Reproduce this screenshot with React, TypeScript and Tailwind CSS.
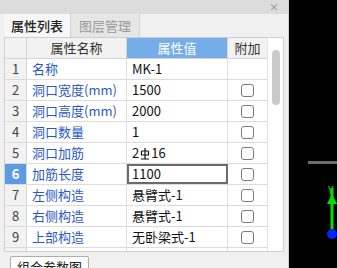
import React from 'react';

type Row = { name: string; value: React.ReactNode; check: boolean };

const RebarIcon = () => (
  <svg width="10" height="13" viewBox="0 0 10 13" className="inline-block mx-[1px] -mt-[2px]">
    <path d="M5 1 V12 M1.5 4 H8.5 M1.5 4 V8 H8.5 V4 M1 12 H9" stroke="#111" strokeWidth="1.2" fill="none" />
  </svg>
);

const rows: Row[] = [
  { name: '名称', value: 'MK-1', check: false },
  { name: '洞口宽度(mm)', value: '1500', check: true },
  { name: '洞口高度(mm)', value: '2000', check: true },
  { name: '洞口数量', value: '1', check: true },
  { name: '洞口加筋', value: <span>2<RebarIcon />16</span>, check: true },
  { name: '加筋长度', value: '1100', check: true },
  { name: '左侧构造', value: '悬臂式-1', check: true },
  { name: '右侧构造', value: '悬臂式-1', check: true },
  { name: '上部构造', value: '无卧梁式-1', check: true },
  { name: '', value: '', check: true },
];

const Checkbox = () => (
  <div className="w-[13px] h-[13px] rounded-[3px] border border-[#7a7a7a] bg-white" />
);

const App = () => {
  return (
    <div
      className="w-[337px] h-[268px] flex overflow-hidden bg-black text-[13px] text-[#111]"
      style={{ fontFamily: '"Noto Sans CJK SC", "Noto Sans", sans-serif' }}
    >
      <div className="w-[288px] h-full bg-[#f0f0f0] flex flex-col overflow-hidden">
        {/* title bar */}
        <div className="h-[14px] shrink-0 bg-[#dcdcdc] flex items-center justify-end pr-[9px] text-[10px] leading-none text-[#8a8a8a]">
          ×
        </div>
        {/* tabs */}
        <div className="h-[23px] shrink-0 flex items-end pl-[4px] bg-[#f0f0f0]">
          <div className="h-[23px] px-[7px] flex items-center bg-[#f7f7f7] border-r border-[#d0d0d0] font-medium text-[#222]">
            属性列表
          </div>
          <div className="h-[23px] px-[8px] flex items-center bg-[#e6e6e6] border-r border-[#d4d4d4] text-[#9a9a9a]">
            图层管理
          </div>
        </div>
        {/* table */}
        <div className="mx-[4px] h-[215px] shrink-0 flex border border-[#cfcfcf] bg-white overflow-hidden">
          <div className="w-[262px] flex flex-col">
            <div className="grid grid-cols-[22px_100px_101px_39px] h-[21px] shrink-0 border-b border-[#d6d6d6] leading-[20px]">
              <div className="bg-[#f2f2f2] border-r border-[#d6d6d6]" />
              <div className="bg-[#f2f2f2] border-r border-[#d6d6d6] text-center text-[#333]">属性名称</div>
              <div className="bg-[#75acea] border-r border-[#d6d6d6] text-center text-white">属性值</div>
              <div className="bg-[#f2f2f2] text-center text-[#333]">附加</div>
            </div>
            {rows.map((row, i) => {
              const selected = i === 5;
              return (
                <div
                  key={i}
                  className="grid grid-cols-[22px_100px_101px_39px] h-[21px] shrink-0 border-b border-[#dcdcdc] leading-[20px]"
                >
                  <div
                    className={
                      selected
                        ? 'bg-[#5d9be0] text-white font-bold text-center border-r border-[#d6d6d6]'
                        : 'bg-[#f2f2f2] text-[#444] text-center border-r border-[#d6d6d6]'
                    }
                  >
                    {row.name ? i + 1 : ''}
                  </div>
                  <div className="pl-[5px] text-[#2b57c8] border-r border-[#dcdcdc] whitespace-nowrap overflow-hidden">
                    {row.name}
                  </div>
                  <div
                    className={
                      selected
                        ? 'pl-[3px] border-2 border-[#6b6b6b] leading-[16px] whitespace-nowrap overflow-hidden'
                        : 'pl-[5px] border-r border-[#dcdcdc] whitespace-nowrap overflow-hidden'
                    }
                  >
                    {row.value}
                  </div>
                  <div className="flex items-center justify-center bg-white">
                    {row.check && <Checkbox />}
                  </div>
                </div>
              );
            })}
          </div>
          {/* scrollbar */}
          <div className="flex-1 border-l border-[#e2e2e2] bg-white flex justify-center pt-[12px]">
            <div className="w-[8px] h-[55px] rounded-full bg-[#c9c9c9]" />
          </div>
        </div>
        {/* bottom */}
        <div className="shrink-0 pl-[10px] pt-[4px]">
          <div className="h-[22px] w-[79px] border border-[#adadad] bg-white rounded-[2px] flex items-center justify-center text-[#222]">
            组合参数图
          </div>
        </div>
      </div>
      <div className="flex-1 relative border-l border-[#cfcfcf]">
        <div className="absolute left-[19px] top-[161px] w-[40px] h-[3px] bg-[#6e6e6e]" />
        <svg className="absolute left-[36px] top-[182px]" width="14" height="60" viewBox="0 0 14 60">
          <path d="M7 6 V48" stroke="#00e000" strokeWidth="3" />
          <path d="M2 22 L7 12 L12 22 Z" fill="#00e000" />
          <text x="3" y="12" fill="#00e000" fontSize="10">Y</text>
          <circle cx="7" cy="52" r="5" fill="#0a22ff" />
        </svg>
      </div>
    </div>
  );
};

export default App;
